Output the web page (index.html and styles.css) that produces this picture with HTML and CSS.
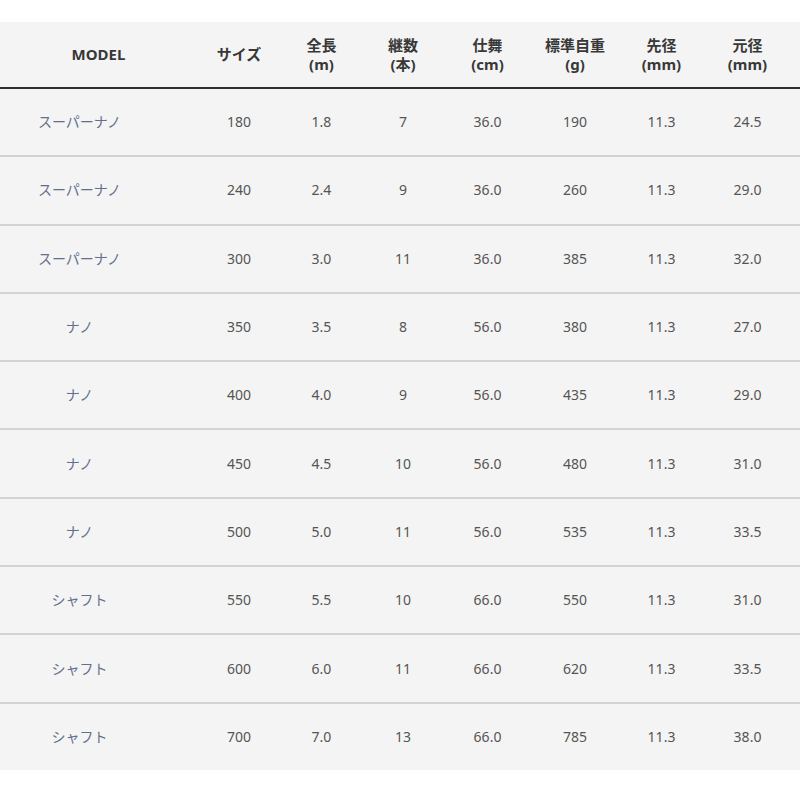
FILE: index.html
```html
<!DOCTYPE html>
<html lang="ja">
<head>
<meta charset="utf-8">
<title>Spec table</title>
<link rel="stylesheet" href="styles.css">
</head>
<body>
<div class="wrap">
<table class="spec">
<colgroup>
<col class="c-model"><col class="c-size"><col class="c-len"><col class="c-num"><col class="c-close"><col class="c-wt"><col class="c-tip"><col class="c-butt">
</colgroup>
<thead>
<tr>
<th class="h-model">MODEL</th>
<th>サイズ</th>
<th>全長<br>(m)</th>
<th>継数<br>(本)</th>
<th>仕舞<br>(cm)</th>
<th>標準自重<br>(g)</th>
<th>先径<br>(mm)</th>
<th class="last">元径<br>(mm)</th>
</tr>
</thead>
<tbody>
<tr><td class="model">スーパーナノ</td><td>180</td><td>1.8</td><td>7</td><td>36.0</td><td>190</td><td>11.3</td><td class="last">24.5</td></tr>
<tr><td class="model">スーパーナノ</td><td>240</td><td>2.4</td><td>9</td><td>36.0</td><td>260</td><td>11.3</td><td class="last">29.0</td></tr>
<tr><td class="model">スーパーナノ</td><td>300</td><td>3.0</td><td>11</td><td>36.0</td><td>385</td><td>11.3</td><td class="last">32.0</td></tr>
<tr><td class="model">ナノ</td><td>350</td><td>3.5</td><td>8</td><td>56.0</td><td>380</td><td>11.3</td><td class="last">27.0</td></tr>
<tr><td class="model">ナノ</td><td>400</td><td>4.0</td><td>9</td><td>56.0</td><td>435</td><td>11.3</td><td class="last">29.0</td></tr>
<tr><td class="model">ナノ</td><td>450</td><td>4.5</td><td>10</td><td>56.0</td><td>480</td><td>11.3</td><td class="last">31.0</td></tr>
<tr><td class="model">ナノ</td><td>500</td><td>5.0</td><td>11</td><td>56.0</td><td>535</td><td>11.3</td><td class="last">33.5</td></tr>
<tr><td class="model">シャフト</td><td>550</td><td>5.5</td><td>10</td><td>66.0</td><td>550</td><td>11.3</td><td class="last">31.0</td></tr>
<tr><td class="model">シャフト</td><td>600</td><td>6.0</td><td>11</td><td>66.0</td><td>620</td><td>11.3</td><td class="last">33.5</td></tr>
<tr><td class="model">シャフト</td><td>700</td><td>7.0</td><td>13</td><td>66.0</td><td>785</td><td>11.3</td><td class="last">38.0</td></tr>
</tbody>
</table>
</div>
</body>
</html>
```
FILE: styles.css
```css
html, body {
  margin: 0;
  padding: 0;
  background: #ffffff;
}

.wrap {
  padding-top: 22px;
}

.spec {
  width: 800px;
  table-layout: fixed;
  border-collapse: separate;
  border-spacing: 0;
  background: #f4f4f4;
  font-family: "Noto Sans", "Noto Sans CJK JP", sans-serif;
}

.c-model { width: 197px; }
.c-size { width: 84px; }
.c-len { width: 81px; }
.c-num { width: 82px; }
.c-close { width: 87px; }
.c-wt { width: 88px; }
.c-tip { width: 85px; }
.c-butt { width: 96px; }

.spec th {
  height: 65px;
  padding: 0;
  border-bottom: 2px solid #2e2e2e;
  font-size: 15px;
  line-height: 19px;
  font-weight: 700;
  color: #383838;
  text-align: center;
  vertical-align: middle;
}

.spec td {
  height: 66.3px;
  padding: 0;
  border-bottom: 2px solid #d2d2d2;
  font-size: 14px;
  line-height: 20px;
  color: #555555;
  text-align: center;
  vertical-align: middle;
}

.spec tbody tr:last-child td {
  border-bottom: none;
}

.spec td.model {
  padding-right: 38px;
  color: #62708c;
}

.spec .last {
  padding-right: 9px;
}
```
